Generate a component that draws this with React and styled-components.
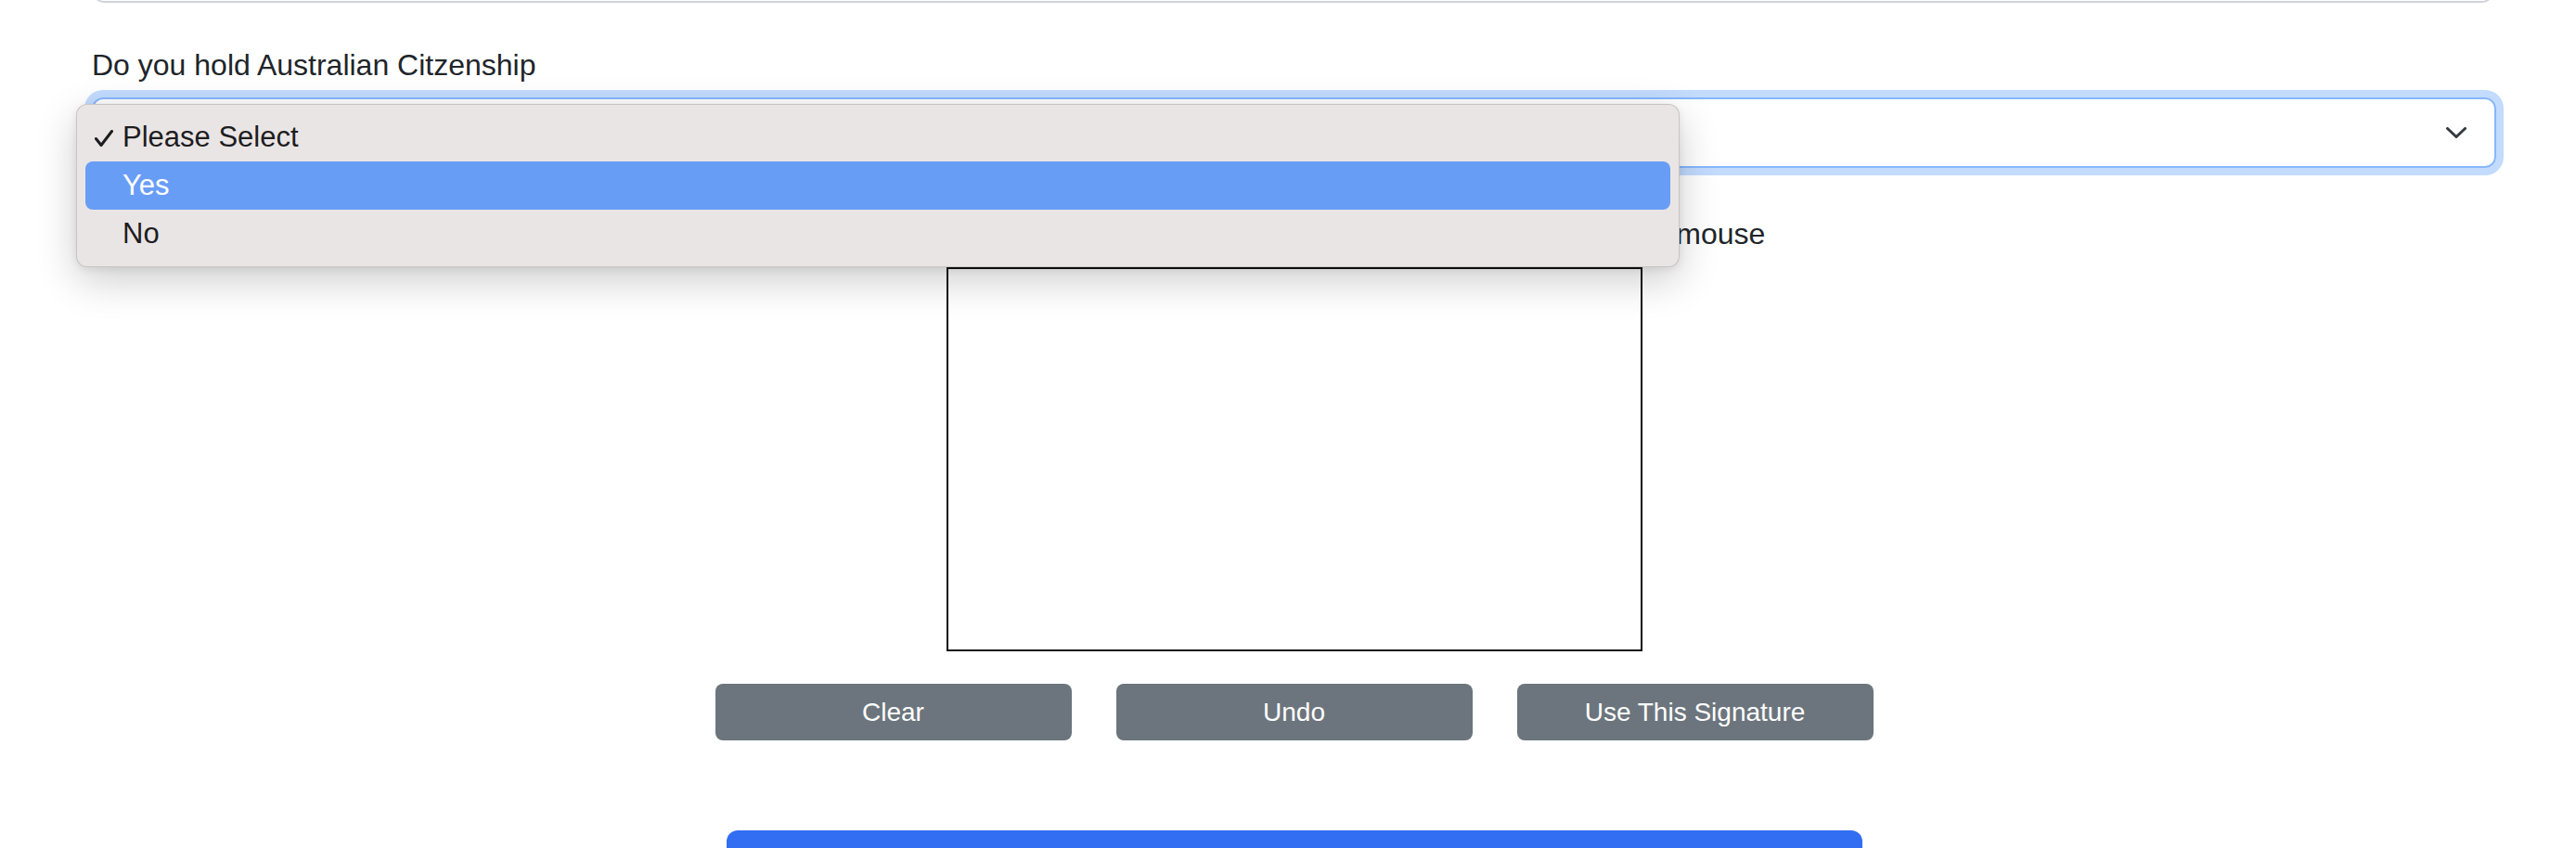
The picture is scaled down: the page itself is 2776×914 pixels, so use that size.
import React from "react";
import styled, { createGlobalStyle } from "styled-components";

const options = ["Please Select", "Yes", "No"];

export default function App() {
  return (
    <>
      <GlobalStyle />
      <Page>
        <Form>
          <PrevInput />
          <Field>
            <Label>Do you hold Australian Citzenship</Label>
            <SelectBox>
              <svg width="22" height="12" viewBox="0 0 22 12">
                <path
                  d="M1.5 1.5 L11 10.5 L20.5 1.5"
                  fill="none"
                  stroke="#343a40"
                  strokeWidth="3"
                  strokeLinecap="round"
                  strokeLinejoin="round"
                />
              </svg>
            </SelectBox>
            <Menu>
              {options.map((opt, i) => (
                <Option key={opt} $active={i === 1}>
                  {i === 0 && (
                    <Check width="20" height="18" viewBox="0 0 20 18">
                      <path
                        d="M1.5 9.5 L7 16.5 L18.5 1.5"
                        fill="none"
                        stroke="#1d1d1f"
                        strokeWidth="3"
                        strokeLinecap="round"
                        strokeLinejoin="round"
                      />
                    </Check>
                  )}
                  {opt}
                </Option>
              ))}
            </Menu>
          </Field>
          <SignHint>
            Please draw your signature in the box below using your finger or mouse
          </SignHint>
          <PadRow>
            <SignaturePad />
          </PadRow>
          <ButtonRow>
            <PadButton>Clear</PadButton>
            <PadButton>Undo</PadButton>
            <PadButton>Use This Signature</PadButton>
          </ButtonRow>
          <SubmitRow>
            <SubmitButton>Submit</SubmitButton>
          </SubmitRow>
        </Form>
      </Page>
    </>
  );
}

const GlobalStyle = createGlobalStyle`
  html, body {
    margin: 0;
    overflow: hidden;
    background: #fff;
  }
  body {
    font-family: "Liberation Sans", Arial, sans-serif;
    color: #212529;
  }
  * {
    box-sizing: border-box;
  }
`;

const Page = styled.div`
  padding: 0 86px 0 99px;
`;

const Form = styled.div`
  display: flex;
  flex-direction: column;
  margin-top: -73px;
`;

const PrevInput = styled.div`
  height: 76px;
  margin: 0 3px 43px 1px;
  border: 2px solid #ced4da;
  border-radius: 12px;
`;

const Field = styled.div`
  position: relative;
`;

const Label = styled.label`
  display: block;
  font-size: 32px;
  line-height: 48px;
  margin-bottom: 11px;
`;

const SelectBox = styled.div`
  display: flex;
  align-items: center;
  justify-content: flex-end;
  height: 76px;
  padding: 0 30px 0 24px;
  border: 2px solid #86b7fe;
  border-radius: 12px;
  box-shadow: 0 0 0 8px rgba(13, 110, 253, 0.25);
`;

const Menu = styled.div`
  position: absolute;
  top: 66px;
  left: -17px;
  width: 1728px;
  padding: 9px;
  background: #eae5e5;
  border: 1px solid rgba(0, 0, 0, 0.14);
  border-radius: 12px;
  box-shadow: 0 14px 44px rgba(0, 0, 0, 0.2), 0 2px 8px rgba(0, 0, 0, 0.08);
  z-index: 2;
`;

const Option = styled.div`
  position: relative;
  height: 52px;
  line-height: 52px;
  padding-left: 40px;
  font-size: 31px;
  border-radius: 8px;
  color: ${(p) => (p.$active ? "#fff" : "#1d1d1f")};
  background: ${(p) => (p.$active ? "#689df6" : "transparent")};
`;

const Check = styled.svg`
  position: absolute;
  left: 10px;
  top: 18px;
`;

const SignHint = styled.p`
  margin: 47px 0 0;
  font-size: 32px;
  line-height: 48px;
  text-align: center;
`;

const PadRow = styled.div`
  display: flex;
  justify-content: center;
  margin-top: 12px;
`;

const SignaturePad = styled.div`
  width: 750px;
  height: 414px;
  border: 2px solid #111;
  background: #fff;
`;

const ButtonRow = styled.div`
  display: flex;
  justify-content: center;
  gap: 48px;
  margin-top: 35px;
`;

const PadButton = styled.button`
  width: 384px;
  height: 61px;
  border: none;
  border-radius: 8px;
  background: #6c757d;
  color: #fff;
  font-family: "Liberation Sans", Arial, sans-serif;
  font-size: 28px;
`;

const SubmitRow = styled.div`
  display: flex;
  justify-content: center;
  margin-top: 97px;
`;

const SubmitButton = styled.button`
  width: 1224px;
  height: 100px;
  border: none;
  border-radius: 12px;
  background: #326ef2;
  color: #fff;
  font-family: "Liberation Sans", Arial, sans-serif;
  font-size: 32px;
`;
